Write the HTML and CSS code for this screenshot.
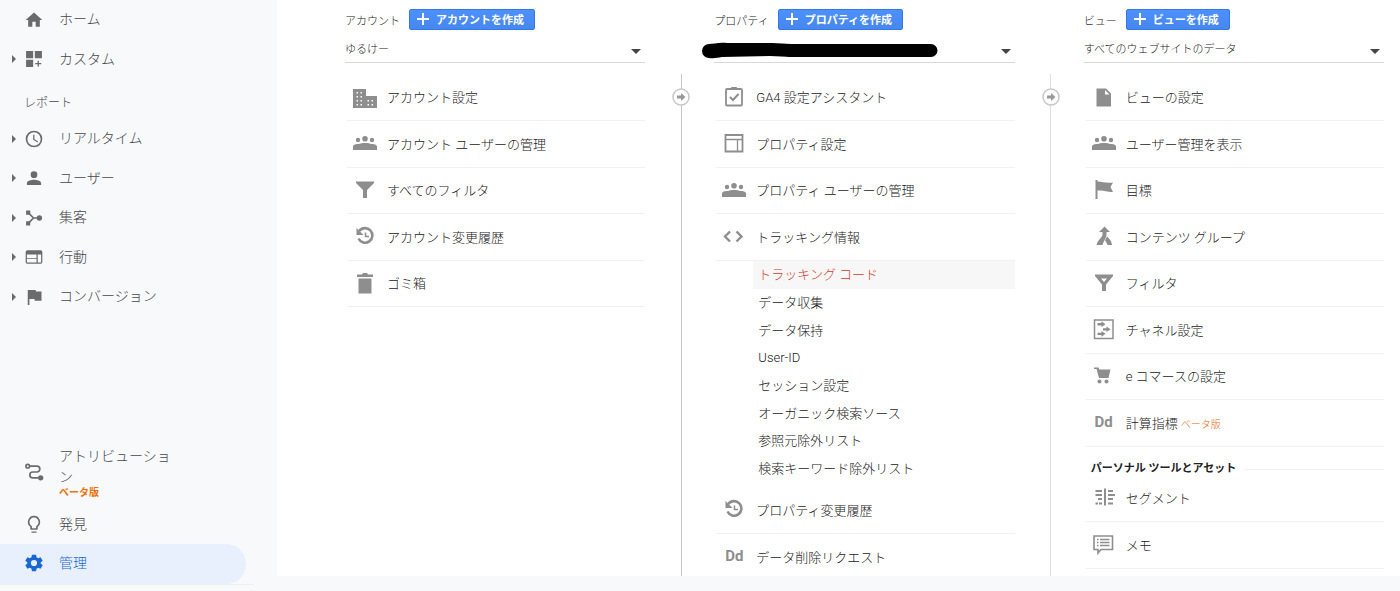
FILE: index.html
```
<!DOCTYPE html>
<html lang="ja">
<head>
<meta charset="utf-8">
<meta name="viewport" content="width=device-width, initial-scale=1">
<title>管理</title>
<link rel="stylesheet" href="styles.css">
</head>
<body>
<svg class="sprite" aria-hidden="true">
  <symbol id="people" viewBox="0 0 24 24"><circle cx="5" cy="9" r="2.200"/><circle cx="12" cy="7.800" r="2.800"/><circle cx="19" cy="9" r="2.200"/><path d="M0 19v-3.500c0-2 3-2.900 5.500-2.500 3-1.500 10-1.500 13 0 2.500-.4 5.500.5 5.500 2.500V19z"/></symbol>
  <symbol id="history" viewBox="0 0 24 24"><path d="M6.200 7.100A7.300 7.300 0 1 1 5.500 14.500" fill="none" stroke="currentColor" stroke-width="2.600"/><path d="M3.500 4v7H10.500z"/><path d="M12.500 8.500v4h3.500" fill="none" stroke="currentColor" stroke-width="1.500"/></symbol>
  <symbol id="arrow" viewBox="0 0 18 18"><circle cx="9" cy="9" r="8" fill="#fff" stroke="#c8c8c8" stroke-width="1.500"/><path d="M5 7.500h4V5l4.500 4L9 13v-2.500H5z"/></symbol>
  <symbol id="plus" viewBox="0 0 12 12"><path d="M5 0h2v5h5v2H7v5H5V7H0V5h5z"/></symbol>
</svg>
<div class="app">
  <nav class="sidebar" aria-label="メイン">
    <ul class="nav">
      <li><a class="nav-link" href="#"><svg class="nav-icon" viewBox="0 0 24 24"><path d="M10 20v-6h4v6h5v-8h3L12 3 2 12h3v8z"/></svg>ホーム</a></li>
      <li><a class="nav-link has-children" href="#"><svg class="nav-icon" viewBox="0 0 24 24"><path d="M2.500 2.500H11V11H2.500zM13 2.500h8.500V11H13zM2.500 13H11v8.500H2.500zM16.300 14h1.600v2.700h2.800v1.600h-2.800V21h-1.600v-2.700h-2.800v-1.600h2.800z"/></svg>カスタム</a></li>
    </ul>
    <h2 class="nav-heading">レポート</h2>
    <ul class="nav">
      <li><a class="nav-link has-children" href="#"><svg class="nav-icon" viewBox="0 0 24 24"><path d="M12 2a10 10 0 1 0 0 20 10 10 0 0 0 0-20zm0 18a8 8 0 1 1 0-16 8 8 0 0 1 0 16zm.5-13H11v6l5.200 3.200.8-1.300-4.500-2.700z"/></svg>リアルタイム</a></li>
      <li><a class="nav-link has-children" href="#"><svg class="nav-icon" viewBox="0 0 24 24"><path d="M12 12a4 4 0 1 0 0-8 4 4 0 0 0 0 8zm0 2c-3 0-8.500 1.300-8.500 4v2.500h17V18c0-2.700-5.500-4-8.500-4z"/></svg>ユーザー</a></li>
      <li><a class="nav-link has-children" href="#"><svg class="nav-icon" viewBox="0 0 24 24"><path d="M2.500 3h5v5h-5zM2.500 16h5v5h-5z"/><circle cx="18.500" cy="12" r="3.200"/><path d="M5 5.500 11.500 12H18M5 18.500l6.500-6.500" fill="none" stroke="currentColor" stroke-width="2"/></svg>集客</a></li>
      <li><a class="nav-link has-children" href="#"><svg class="nav-icon" viewBox="0 0 24 24"><path d="M20 4H4a2 2 0 0 0-2 2v12c0 1.100.9 2 2 2h16a2 2 0 0 0 2-2V6a2 2 0 0 0-2-2zm-5 14.500H3.500V14.500H15zm0-5H3.500V9H15zm5.500 5h-4V9h4z"/></svg>行動</a></li>
      <li><a class="nav-link has-children" href="#"><svg class="nav-icon" viewBox="0 0 24 24"><path d="M14.400 5.500 14 3.500H4.500V21.500h2v-7h6l.4 2H21v-11z"/></svg>コンバージョン</a></li>
    </ul>
    <ul class="nav nav-bottom">
      <li><a class="nav-link nav-tall" href="#"><svg class="nav-icon" viewBox="0 0 24 24"><g fill="none" stroke="currentColor" stroke-width="2"><circle cx="4.500" cy="5" r="2.200"/><path d="M7 5h8.500a3.500 3.500 0 0 1 0 7h-5a3.500 3.500 0 0 0 0 7H17"/></g><circle cx="20" cy="19" r="3.200"/></svg><span>アトリビューション<small class="beta-bold">ベータ版</small></span></a></li>
      <li><a class="nav-link" href="#"><svg class="nav-icon" viewBox="0 0 24 24"><path d="M9 22.500h6V21H9zM12 2a7.500 7.500 0 0 0-4.500 13.400V18c0 .6.400 1 1 1h7c.6 0 1-.4 1-1v-2.600A7.500 7.500 0 0 0 12 2zm3.300 12.100-.8.600V17h-5v-2.300l-.8-.6A5.500 5.500 0 1 1 15.300 14.100z"/></svg>発見</a></li>
      <li><a class="nav-link nav-active" href="#" aria-current="page"><svg class="nav-icon" viewBox="0 0 24 24"><path fill-rule="evenodd" d="M9.500 2h5l.5 3 2 1.200 2.900-1.100 2.500 4.300-2.400 1.900v1.400l2.400 1.900-2.500 4.300-2.900-1.100-2 1.200-.5 3h-5L9 19l-2-1.200-2.900 1.100-2.500-4.300L4 12.700v-1.400L1.600 9.400l2.500-4.300L7 6.200 9 5zM12 8.300a3.700 3.700 0 1 0 0 7.400 3.700 3.700 0 0 0 0-7.400z"/></svg>管理</a></li>
    </ul>
  </nav>

  <main class="panel">
    <section class="column">
      <div class="column-head"><label for="account">アカウント</label><button class="create" type="button"><svg class="plus"><use href="#plus"/></svg>アカウントを作成</button></div>
      <div class="picker"><select id="account"><option>ゆるけー</option></select></div>
      <ul class="items">
        <li class="item"><a class="item-link" href="#"><svg class="item-icon" viewBox="0 0 24 24"><path fill-rule="evenodd" d="M0 4h13v7h11v12H0zM3.500 7v1.500H5V7zm4 0v1.500H9V7zM3.500 11v1.500H5V11zm4 0v1.500H9V11zm-4 4v1.500H5V15zm4 0v1.500H9V15zm-4 4v1.500H5V19zm4 0v1.500H9V19zm7-4v1.500H16V15zm4 0v1.500H20V15zm-4 4v1.500H16V19zm4 0v1.500H20V19z"/></svg>アカウント設定</a></li>
        <li class="item"><a class="item-link" href="#"><svg class="item-icon"><use href="#people"/></svg>アカウント ユーザーの管理</a></li>
        <li class="item"><a class="item-link" href="#"><svg class="item-icon" viewBox="0 0 24 24"><path d="M3 3.500h18V5l-7 7v8h-4v-8L3 5z"/></svg>すべてのフィルタ</a></li>
        <li class="item"><a class="item-link" href="#"><svg class="item-icon"><use href="#history"/></svg>アカウント変更履歴</a></li>
        <li class="item"><a class="item-link" href="#"><svg class="item-icon" viewBox="0 0 24 24"><path d="M4 3.500h5L10 2h4l1 1.500h5V6H4zM5.500 7.500h13v15h-13z"/></svg>ゴミ箱</a></li>
      </ul>
    </section>

    <div class="divider"><svg class="divider-arrow"><use href="#arrow"/></svg></div>

    <section class="column">
      <div class="column-head"><label for="property">プロパティ</label><button class="create" type="button"><svg class="plus"><use href="#plus"/></svg>プロパティを作成</button></div>
      <div class="picker"><select id="property"><option label=" "></option></select>
        <svg class="redaction" viewBox="0 0 236 16" aria-hidden="true"><path d="M7 1C12 1 16-1 25 0h45l20 1H229a6.500 6.500 0 0 1 0 13H88l-20-1L20 14c-5 1-8 1.500-13 1A7 7 0 0 1 7 1z"/></svg>
      </div>
      <ul class="items">
        <li class="item"><a class="item-link" href="#"><svg class="item-icon" viewBox="0 0 24 24"><rect x="4" y="4" width="16" height="16.500" rx="1" fill="none" stroke="currentColor" stroke-width="1.800"/><path d="M8 4.500 9.500 2h5L16 4.500z"/><path d="m8 12 3 3 5.500-6" fill="none" stroke="currentColor" stroke-width="2"/></svg>GA4 設定アシスタント</a></li>
        <li class="item"><a class="item-link" href="#"><svg class="item-icon" viewBox="0 0 24 24"><path d="M3.500 4h17v16.500h-17z" fill="none" stroke="currentColor" stroke-width="1.800"/><path d="M4 8.500h16M15.500 8.500v12" fill="none" stroke="currentColor" stroke-width="1.300"/></svg>プロパティ設定</a></li>
        <li class="item"><a class="item-link" href="#"><svg class="item-icon"><use href="#people"/></svg>プロパティ ユーザーの管理</a></li>
        <li class="item"><a class="item-link" href="#"><svg class="item-icon" viewBox="0 0 24 24"><path d="m8 7.500-5 5 5 5M14.500 7.500l5 5-5 5" fill="none" stroke="currentColor" stroke-width="2.400"/></svg>トラッキング情報</a></li>
      </ul>
      <ul class="sub-items">
        <li><a class="sub-link sub-active" href="#">トラッキング コード</a></li>
        <li><a class="sub-link" href="#">データ収集</a></li>
        <li><a class="sub-link" href="#">データ保持</a></li>
        <li><a class="sub-link" href="#">User-ID</a></li>
        <li><a class="sub-link" href="#">セッション設定</a></li>
        <li><a class="sub-link" href="#">オーガニック検索ソース</a></li>
        <li><a class="sub-link" href="#">参照元除外リスト</a></li>
        <li><a class="sub-link" href="#">検索キーワード除外リスト</a></li>
      </ul>
      <ul class="items">
        <li class="item"><a class="item-link" href="#"><svg class="item-icon"><use href="#history"/></svg>プロパティ変更履歴</a></li>
        <li class="item"><a class="item-link" href="#"><span class="item-icon dd" aria-hidden="true">Dd</span>データ削除リクエスト</a></li>
      </ul>
    </section>

    <div class="divider divider-light"><svg class="divider-arrow"><use href="#arrow"/></svg></div>

    <section class="column">
      <div class="column-head"><label for="view">ビュー</label><button class="create" type="button"><svg class="plus"><use href="#plus"/></svg>ビューを作成</button></div>
      <div class="picker"><select id="view"><option>すべてのウェブサイトのデータ</option></select></div>
      <ul class="items">
        <li class="item"><a class="item-link" href="#"><svg class="item-icon" viewBox="0 0 24 24"><path fill-rule="evenodd" d="M4.500 3.500H14l5 5v13h-14.500zM13 5v4.500h4.500z"/></svg>ビューの設定</a></li>
        <li class="item"><a class="item-link" href="#"><svg class="item-icon"><use href="#people"/></svg>ユーザー管理を表示</a></li>
        <li class="item"><a class="item-link" href="#"><svg class="item-icon" viewBox="0 0 24 24"><path d="M3.500 2h2v1.500c5 0 8 2 15.500 1L18.500 9l2.500 5c-7-.5-10-2-15.500-1.500V21h-2z"/></svg>目標</a></li>
        <li class="item"><a class="item-link" href="#"><svg class="item-icon" viewBox="0 0 24 24"><path d="m12.500 2.500 5.500 5.500h-3.500v2c0 4-2.500 6-4 11H4.500c1.500-6 6-7 6-11V8H7zM15 12.500c2 2 4.500 4 5 8.500h-4.500c-.5-2-1.500-3-2.500-4.500z"/></svg>コンテンツ グループ</a></li>
        <li class="item"><a class="item-link" href="#"><svg class="item-icon" viewBox="0 0 24 24"><path fill-rule="evenodd" d="M3 3.500h18V5l-7 8.500v6.500h-4v-6.500L3 5zM9 7.500l3 3.500 3-3.500z"/></svg>フィルタ</a></li>
        <li class="item"><a class="item-link" href="#"><svg class="item-icon" viewBox="0 0 24 24"><path d="M2.500 3h18.500v18.500H2.500z" fill="none" stroke="currentColor" stroke-width="1.500"/><path d="M5.500 6h4V4.300l4 2.900-4 2.900V8.400h-4zM11 11.200h3.500V9.500l4 2.800-4 2.800v-1.600H11zM5.500 15.700h4V14l4 2.800-4 2.900V18h-4z"/></svg>チャネル設定</a></li>
        <li class="item"><a class="item-link" href="#"><svg class="item-icon" viewBox="0 0 24 24"><path d="M2 3.500h4.500l1 2H18.500L16.500 14H7L4.500 5H2z"/><circle cx="7.500" cy="17.500" r="2"/><circle cx="14.500" cy="17.500" r="2"/></svg>e コマースの設定</a></li>
        <li class="item"><a class="item-link" href="#"><span class="item-icon dd" aria-hidden="true">Dd</span><span>計算指標 <small class="beta">ベータ版</small></span></a></li>
      </ul>
      <h3 class="group-heading">パーソナル ツールとアセット</h3>
      <ul class="items">
        <li class="item"><a class="item-link" href="#"><svg class="item-icon" viewBox="0 0 24 24"><path d="M12 3.500h2v17h-2zM3.500 5H10v2H3.500zM3.500 9H10v2H3.500zM6 13h4v2H6zM3.500 17.500H6v2H3.500zM7 17.500h3v2H7zM16 5h5v2h-5zM16 9h7v2h-7zM16 13h5v2h-5zM16 17.500h5v2h-5z"/></svg>セグメント</a></li>
        <li class="item"><a class="item-link" href="#"><svg class="item-icon" viewBox="0 0 24 24"><path d="M2 4h18.500v13.500H9l-3 3.500v-3.500H2z" fill="none" stroke="currentColor" stroke-width="1.600"/><path d="M5 7.500h1.500M8 7.500h9.500M5 10.500h1.500M8 10.500h9.500M5 13.500h1.500M8 13.500h9.500" fill="none" stroke="currentColor" stroke-width="1.300"/></svg>メモ</a></li>
      </ul>
    </section>
  </main>
</div>
</body>
</html>
```
FILE: styles.css
```
* { box-sizing: border-box; }

body {
  margin: 0;
  background: #f8f9fb;
  color: #222;
  font-family: Roboto, "Noto Sans CJK JP", sans-serif;
  font-size: 13px;
  font-weight: 300;
}

ul { list-style: none; margin: 0; padding: 0; }
a { color: inherit; text-decoration: none; }
svg { fill: currentColor; flex: none; }
.sprite { display: none; }

.app {
  display: grid;
  grid-template-columns: 277px 1fr;
  height: 100vh;
}

/* Sidebar */
.sidebar {
  display: flex;
  flex-direction: column;
  min-height: 0;
  padding-bottom: 6px;
  color: #44474b;
}

.nav-link {
  display: flex;
  align-items: center;
  gap: 15px;
  position: relative;
  height: 40px;
  width: 246px;
  padding-left: 24px;
  padding-right: 72px;
  font-size: 14px;
  line-height: 21px;
}

.nav li:nth-child(odd) > .nav-link { height: 39px; }
.nav-icon { width: 20px; height: 20px; color: #6b6b6b; }

.has-children::before {
  content: "";
  position: absolute;
  left: 12px;
  top: 16px;
  border: 4px solid transparent;
  border-left-color: #6b6b6b;
  border-right: 0;
}

.nav-heading {
  margin: 0;
  padding-left: 24px;
  padding-top: 8px;
  font-size: 12px;
  font-weight: 300;
  line-height: 32px;
}

.nav-bottom {
  width: 254px;
  margin-top: auto;
  border-bottom: 1px solid #eceef0;
}

.nav-bottom li > .nav-link.nav-tall { height: 60px; margin-bottom: 2px; }
.nav-bottom li > .nav-link.nav-active { height: 40px; padding-bottom: 2px; }
.beta-bold {
  display: block;
  color: #e8710a;
  font-size: 10px;
  font-weight: 700;
  line-height: 10px;
}

.nav-active {
  border-radius: 0 20px 20px 0;
  background: #e8f0fe;
  color: #1967d2;
}

.nav-active .nav-icon { color: #1967d2; }

/* Admin panel */
.panel {
  display: grid;
  grid-template-columns: 1fr 69px 1fr 69px 1fr;
  height: calc(100vh - 15px);
  overflow-y: auto;
  scrollbar-width: none;
  padding: 0 16px 0 68px;
  background: #fff;
}

.column { min-width: 0; height: 0; }

.column-head {
  display: flex;
  align-items: center;
  gap: 9px;
  height: 39px;
  font-size: 11px;
}

.create {
  display: flex;
  align-items: center;
  gap: 7px;
  height: 21px;
  padding: 0 10px 2px 7px;
  border: 1px solid #3079ed;
  border-radius: 2px;
  background: linear-gradient(#4d90fe, #4787ed);
  color: #fff;
  font: inherit;
  font-weight: 700;
  white-space: nowrap;
}

.plus { width: 12px; height: 12px; }

.picker {
  position: relative;
  height: 24px;
  border-bottom: 1px solid #d8d8d8;
}

.picker::after {
  content: "";
  position: absolute;
  right: 4px;
  top: 10px;
  border: 5px solid transparent;
  border-top-color: #444;
  border-bottom: 0;
  pointer-events: none;
}

.picker select {
  appearance: none;
  width: 100%;
  height: 20px;
  padding: 0;
  border: 0;
  background: none;
  color: inherit;
  font: inherit;
  font-size: 11px;
}

.redaction {
  position: absolute;
  left: -12px;
  top: 4px;
  width: 236px;
  height: 16px;
  overflow: visible;
  fill: #000;
}

.items { padding-left: 2px; }
.picker + .items { padding-top: 12px; }
.item { border-bottom: 1px solid #f1f1f1; height: 47px; }
.picker + .items .item:nth-child(odd) { height: 46px; }

.item-link {
  display: flex;
  align-items: center;
  gap: 10px;
  height: 100%;
  padding-left: 6px;
  padding-bottom: 2px;
}

.item-icon { flex: none; width: 24px; height: 24px; color: #8e8e8e; }

.dd {
  font-size: 15px;
  font-weight: 700;
  line-height: 24px;
  text-align: center;
}

.beta { color: #e0640f; font-size: 10px; }

.sub-items { padding: 0 0 4px 39px; }
.sub-link { display: block; padding-left: 5px; line-height: 28px; }
.sub-items li:nth-child(3n) .sub-link { line-height: 27px; }
.sub-active { background: #f7f7f7; color: #d23a28; }

.group-heading {
  display: flex;
  align-items: center;
  gap: 9px;
  margin: 0;
  padding: 16px 0 0 7px;
  font-size: 11px;
  font-weight: 700;
  line-height: 12px;
}

.group-heading::after {
  content: "";
  flex: 1;
  border-top: 1px solid #efefef;
}

.divider {
  display: flex;
  justify-content: center;
  position: relative;
  margin-top: 74px;
  padding-left: 3px;
}

.divider::before {
  content: "";
  border-left: 1px solid #c6c6c6;
}

.divider-light::before { border-color: #e0e0e0; }

.divider-arrow {
  position: absolute;
  top: 14px;
  width: 18px;
  height: 18px;
  color: #999;
}
```
